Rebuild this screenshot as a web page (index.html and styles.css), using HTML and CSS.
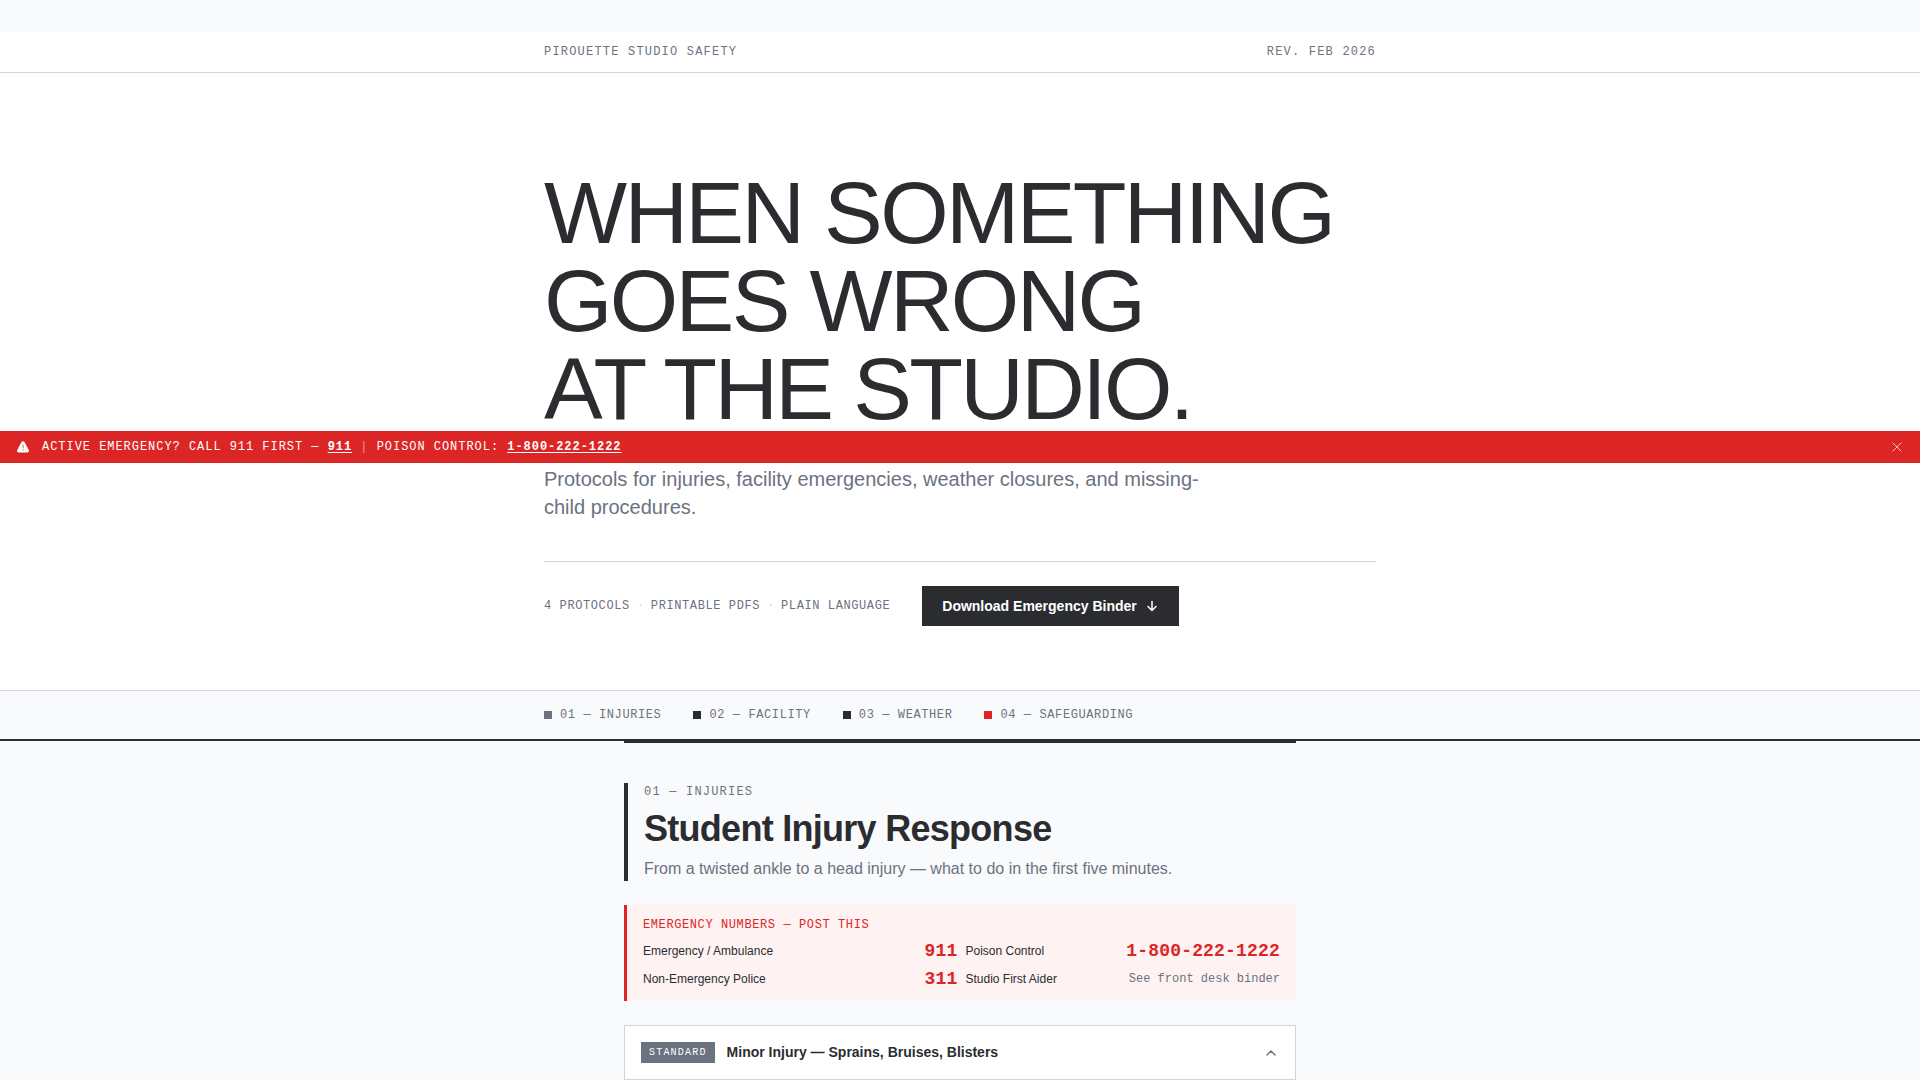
FILE: index.html
```html
<!DOCTYPE html>
<html lang="en">
<head>
<meta charset="utf-8">
<meta name="viewport" content="width=device-width, initial-scale=1">
<title>Pirouette Studio Safety</title>
<link rel="stylesheet" href="styles.css">
</head>
<body>
<aside class="alert" aria-label="Active emergency">
  <svg class="alert-icon" viewBox="0 0 14 14" aria-hidden="true"><path d="M7 1.200c.7 0 1.200.4 1.500.9l4.100 7.600c.8 1.500 0 2.800-1.500 2.800H2.900c-1.500 0-2.300-1.300-1.500-2.800L5.500 2.100C5.800 1.600 6.300 1.200 7 1.200z" fill="#fff"/><path d="M7 5v3" stroke="#dc2626" stroke-width=".8" stroke-linecap="round"/><circle cx="7" cy="10" r=".6" fill="#dc2626"/></svg>
  <p class="alert-text">ACTIVE EMERGENCY? CALL 911 FIRST — <a href="tel:911">911</a> <span class="alert-bar">|</span> POISON CONTROL: <a href="tel:18002221222">1-800-222-1222</a></p>
  <button class="alert-close" type="button" aria-label="Dismiss"><svg viewBox="0 0 14 14" aria-hidden="true"><path d="M3 3l8 8M11 3l-8 8"/></svg></button>
</aside>

<header class="topbar">
  <div class="wrap topbar-row">
    <span>PIROUETTE STUDIO SAFETY</span>
    <span>REV. FEB 2026</span>
  </div>
</header>

<section class="hero">
  <div class="wrap">
    <h1>WHEN SOMETHING<br>GOES WRONG<br>AT THE STUDIO.</h1>
    <p class="lede">Protocols for injuries, facility emergencies, weather closures, and missing-child procedures.</p>
    <div class="hero-foot">
      <div class="meta">
        <span>4 PROTOCOLS</span><span class="dot">·</span><span>PRINTABLE PDFS</span><span class="dot">·</span><span>PLAIN LANGUAGE</span>
      </div>
      <button class="download" type="button">Download Emergency Binder
        <svg viewBox="0 0 14 14" aria-hidden="true"><path d="M7 2.500v9M3 7.500l4 4 4-4"/></svg>
      </button>
    </div>
  </div>
</section>

<nav class="toc" aria-label="Protocols">
  <div class="wrap toc-row">
    <a href="#injuries"><i class="sq sq-gray"></i>01 — INJURIES</a>
    <a href="#facility"><i class="sq"></i>02 — FACILITY</a>
    <a href="#weather"><i class="sq"></i>03 — WEATHER</a>
    <a href="#safeguarding"><i class="sq sq-red"></i>04 — SAFEGUARDING</a>
  </div>
</nav>

<main class="protocol" id="injuries">
  <header class="protocol-head">
    <p class="kicker">01 — INJURIES</p>
    <h2>Student Injury Response</h2>
    <p class="summary">From a twisted ankle to a head injury — what to do in the first five minutes.</p>
  </header>

  <section class="numbers">
    <h3>EMERGENCY NUMBERS — POST THIS</h3>
    <dl>
      <div><dt>Emergency / Ambulance</dt><dd>911</dd></div>
      <div><dt>Poison Control</dt><dd>1-800-222-1222</dd></div>
      <div><dt>Non-Emergency Police</dt><dd>311</dd></div>
      <div><dt>Studio First Aider</dt><dd class="note">See front desk binder</dd></div>
    </dl>
  </section>

  <button class="card" type="button" aria-expanded="true">
    <span class="badge">STANDARD</span>
    <span class="card-title">Minor Injury — Sprains, Bruises, Blisters</span>
    <svg viewBox="0 0 16 16" aria-hidden="true"><path d="M4 10l4-4 4 4"/></svg>
  </button>
</main>
</body>
</html>
```
FILE: styles.css
```css
:root {
  --ink: #2b2c2f;
  --gray: #6b7280;
  --line: #d1d5db;
  --red: #dc2626;
  --paper: #f9fafc;
  --mono: "Liberation Mono", monospace;
}
* { box-sizing: border-box; }
body, h1, h2, h3, p, dl, dd { margin: 0; }
body {
  padding-top: 32px;
  background: var(--paper);
  color: var(--ink);
  font-family: "Liberation Sans", sans-serif;
  font-size: 16px;
  line-height: 24px;
}
button { border: 0; font-family: inherit; cursor: pointer; }
svg { flex: none; fill: none; stroke-linecap: round; stroke-linejoin: round; }
.wrap { max-width: 896px; margin: 0 auto; padding: 0 32px; }

.alert {
  position: absolute;
  top: 431px;
  left: 0;
  right: 0;
  display: flex;
  align-items: center;
  gap: 12px;
  height: 32px;
  padding: 0 16px;
  background: var(--red);
  color: #fff;
}
.alert-icon { width: 14px; height: 14px; }
.alert-text { flex: 1; font: 12px/16px var(--mono); letter-spacing: 0.08em; }
.alert a { color: inherit; font-weight: 700; text-underline-offset: 2px; }
.alert-bar { opacity: 0.5; }
.alert-close { display: flex; padding: 0; background: none; }
.alert-close svg { width: 14px; height: 14px; stroke: #fff; opacity: 0.7; }

.topbar { background: #fff; border-bottom: 1px solid var(--line); }
.topbar-row {
  display: flex;
  justify-content: space-between;
  padding-top: 12px;
  padding-bottom: 12px;
  color: var(--gray);
  font: 12px/16px var(--mono);
  letter-spacing: 0.1em;
}

.hero { padding: 96px 0 64px; background: #fff; border-bottom: 1px solid var(--line); }
h1 { font-size: 88px; font-weight: 400; line-height: 88px; letter-spacing: -0.03em; }
.lede { max-width: 672px; margin-top: 32px; color: var(--gray); font-size: 20px; line-height: 28px; }
.hero-foot {
  display: flex;
  flex-wrap: wrap;
  align-items: center;
  gap: 32px;
  margin-top: 40px;
  padding-top: 24px;
  border-top: 1px solid var(--line);
}
.meta { display: flex; gap: 7px; color: var(--gray); font: 12px/16px var(--mono); letter-spacing: 0.05em; }
.dot { width: 7px; color: var(--line); }
.download {
  display: flex;
  align-items: center;
  gap: 8px;
  height: 40px;
  padding: 0 20px;
  background: var(--ink);
  color: #fff;
  font-size: 14px;
  font-weight: 700;
}
.download svg { width: 14px; height: 14px; stroke: #fff; stroke-width: 1.5; }

.toc { border-bottom: 2px solid var(--ink); }
.toc-row { display: flex; flex-wrap: wrap; gap: 0 32px; }
.toc a {
  display: flex;
  align-items: center;
  gap: 8px;
  height: 48px;
  color: var(--gray);
  font: 12px/16px var(--mono);
  letter-spacing: 0.05em;
  text-decoration: none;
}
.sq { width: 8px; height: 8px; background: var(--ink); }
.sq-gray { background: var(--gray); }
.sq-red { background: var(--red); }

.protocol {
  display: flex;
  flex-direction: column;
  gap: 24px;
  max-width: 672px;
  margin: 0 auto;
  padding-top: 40px;
  border-top: 2px solid var(--ink);
}
.protocol-head { padding-left: 16px; border-left: 4px solid var(--ink); }
.kicker { color: var(--gray); font: 12px/18px var(--mono); letter-spacing: 0.1em; }
h2 { margin: 8px 0; font-size: 36px; line-height: 40px; letter-spacing: -0.02em; }
.summary { color: var(--gray); }

.numbers { padding: 12px 16px; background: #fef2f2; border-left: 3px solid var(--red); }
.numbers h3 { margin-bottom: 8px; color: var(--red); font: 12px/16px var(--mono); letter-spacing: 0.05em; }
.numbers dl { display: grid; grid-template-columns: 1fr 1fr; gap: 8px; }
.numbers dl div { display: flex; align-items: center; justify-content: space-between; height: 20px; }
.numbers dt { font-size: 12px; line-height: 16px; }
.numbers dd { color: var(--red); font: 700 18px/20px var(--mono); letter-spacing: 0.01em; }
.numbers .note { color: var(--gray); font-size: 12px; font-weight: 400; letter-spacing: 0; }

.card {
  display: flex;
  align-items: center;
  gap: 12px;
  padding: 16px;
  background: #fff;
  border: 1px solid var(--line);
  color: var(--ink);
  text-align: left;
}
.badge { padding: 4px 8px; background: var(--gray); color: #fff; font: 10px/13px var(--mono); letter-spacing: 0.12em; }
.card-title { flex: 1; font-size: 14px; font-weight: 700; line-height: 21px; }
.card svg { width: 16px; height: 16px; stroke: var(--gray); stroke-width: 1.5; }
```
